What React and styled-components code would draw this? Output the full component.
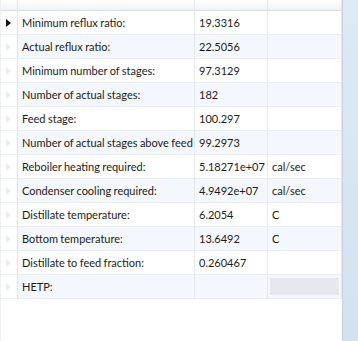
import styled, { createGlobalStyle } from "styled-components";

const GlobalStyle = createGlobalStyle`
  html, body {
    margin: 0;
    padding: 0;
    background: #ffffff;
  }
  body {
    font-family: Lato, "Noto Sans", sans-serif;
  }
`;

const rows = [
  { label: "Minimum reflux ratio:", value: "19.3316", unit: "" },
  { label: "Actual reflux ratio:", value: "22.5056", unit: "" },
  { label: "Minimum number of stages:", value: "97.3129", unit: "" },
  { label: "Number of actual stages:", value: "182", unit: "" },
  { label: "Feed stage:", value: "100.297", unit: "" },
  { label: "Number of actual stages above feed", value: "99.2973", unit: "" },
  { label: "Reboiler heating required:", value: "5.18271e+07", unit: "cal/sec" },
  { label: "Condenser cooling required:", value: "4.9492e+07", unit: "cal/sec" },
  { label: "Distillate temperature:", value: "6.2054", unit: "C" },
  { label: "Bottom temperature:", value: "13.6492", unit: "C" },
  { label: "Distillate to feed fraction:", value: "0.260467", unit: "" },
  { label: "HETP:", value: "", unit: "", disabled: true },
];

const Page = styled.div`
  display: flex;
  width: 358px;
  height: 341px;
  overflow: hidden;
`;

const GridPanel = styled.div`
  width: 343px;
  height: 100%;
  background: #ffffff;
  border-right: 1px solid #c9d2da;
  border-left: 1px solid #eef1f4;
  box-sizing: border-box;
`;

const SidePanel = styled.div`
  flex: 1;
  background: linear-gradient(180deg, #dde9f5 0%, #d3e2f1 100%);
`;

const Table = styled.div`
  display: grid;
  grid-template-columns: 17px 177px 73px 74px;
`;

const HeaderCell = styled.div`
  height: 10px;
  background: linear-gradient(180deg, #ffffff 0%, #f1f3f5 100%);
  border-bottom: 1px solid #d5dce2;
  border-right: 1px solid #e1e6ea;
  box-sizing: content-box;
`;

const RowHeader = styled.div`
  height: 23px;
  display: flex;
  align-items: center;
  padding-left: 5px;
  border-right: 1px solid #dfe4e8;
  border-bottom: 1px solid #eef2f5;
  box-sizing: content-box;
  background: #ffffff;
`;

const Arrow = styled.span`
  width: 0;
  height: 0;
  border-top: 4px solid transparent;
  border-bottom: 4px solid transparent;
  border-left: 5px solid ${(p) => (p.$current ? "#111111" : "#eeeeee")};
`;

const Cell = styled.div`
  height: 23px;
  display: flex;
  align-items: center;
  padding-left: ${(p) => p.$pad || 4}px;
  font-size: 11px;
  word-spacing: -0.4px;
  color: #1b1b1b;
  white-space: nowrap;
  overflow: hidden;
  background: ${(p) => (p.$alt ? "#f4f8fc" : "#ffffff")};
  border-right: 1px solid #e4e9ed;
  border-bottom: 1px solid #e9eef2;
  box-sizing: content-box;
`;

const DisabledBox = styled.div`
  flex: 1;
  height: 17px;
  margin-right: 2px;
  background: #e7e7ed;
`;

export default function App() {
  return (
    <Page>
      <GlobalStyle />
      <GridPanel>
        <Table>
          <HeaderCell />
          <HeaderCell />
          <HeaderCell />
          <HeaderCell />
          {rows.map((r, i) => {
            const alt = i % 2 === 1;
            return [
              <RowHeader key={`h${i}`}>
                <Arrow $current={i === 0} />
              </RowHeader>,
              <Cell key={`l${i}`} $alt={alt}>
                {r.label}
              </Cell>,
              <Cell key={`v${i}`} $alt={alt}>
                {r.value}
              </Cell>,
              <Cell key={`u${i}`} $alt={alt} $pad={r.disabled ? 2 : 4}>
                {r.disabled ? <DisabledBox /> : r.unit}
              </Cell>,
            ];
          })}
        </Table>
      </GridPanel>
      <SidePanel />
    </Page>
  );
}
